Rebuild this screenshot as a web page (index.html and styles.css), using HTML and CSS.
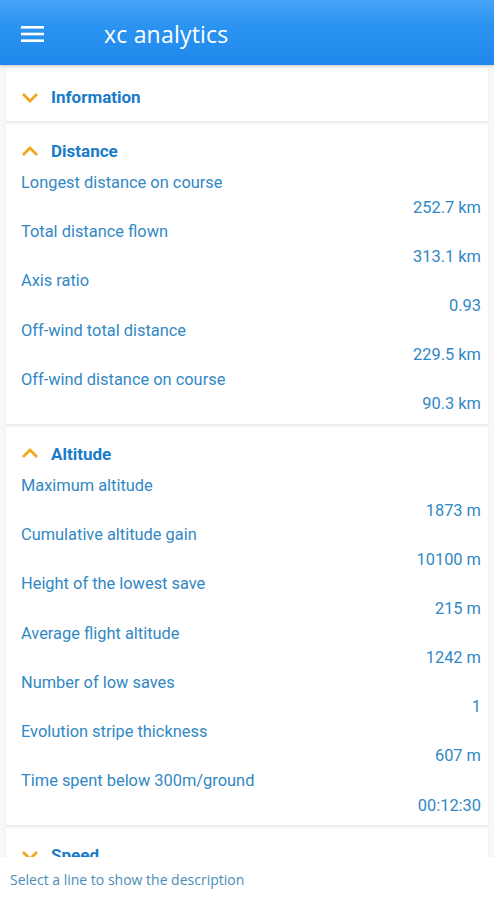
FILE: index.html
```html
<!DOCTYPE html>
<html>
<head>
    <meta charset="utf-8" />
    <title>xc analytics</title>
    <link rel="stylesheet" href="styles.css">
</head>
<body>
    <div class="app-bar">
        <svg class="menu-icon" width="24" height="16" viewBox="0 0 24 16">
            <rect x="0" y="0" width="23" height="2.6" fill="#fff" />
            <rect x="0" y="6.7" width="23" height="2.6" fill="#fff" />
            <rect x="0" y="13.4" width="23" height="2.6" fill="#fff" />
        </svg>
        <span class="app-title">xc analytics</span>
    </div>

    <div class="content">
        <div class="card collapsed">
            <div class="card-header">
                <svg class="chevron" width="18" height="11" viewBox="0 0 18 11"><path d="M2 2 L9 9 L16 2" /></svg>
                Information
            </div>
        </div>

        <div class="card">
            <div class="card-header">
                <svg class="chevron" width="18" height="11" viewBox="0 0 18 11"><path d="M2 9 L9 2 L16 9" /></svg>
                Distance
            </div>
            <div class="row"><div class="label">Longest distance on course</div><div class="value">252.7 km</div></div>
            <div class="row"><div class="label">Total distance flown</div><div class="value">313.1 km</div></div>
            <div class="row"><div class="label">Axis ratio</div><div class="value">0.93</div></div>
            <div class="row"><div class="label">Off-wind total distance</div><div class="value">229.5 km</div></div>
            <div class="row"><div class="label">Off-wind distance on course</div><div class="value">90.3 km</div></div>
        </div>

        <div class="card">
            <div class="card-header">
                <svg class="chevron" width="18" height="11" viewBox="0 0 18 11"><path d="M2 9 L9 2 L16 9" /></svg>
                Altitude
            </div>
            <div class="row"><div class="label">Maximum altitude</div><div class="value">1873 m</div></div>
            <div class="row"><div class="label">Cumulative altitude gain</div><div class="value">10100 m</div></div>
            <div class="row"><div class="label">Height of the lowest save</div><div class="value">215 m</div></div>
            <div class="row"><div class="label">Average flight altitude</div><div class="value">1242 m</div></div>
            <div class="row"><div class="label">Number of low saves</div><div class="value">1</div></div>
            <div class="row"><div class="label">Evolution stripe thickness</div><div class="value">607 m</div></div>
            <div class="row"><div class="label">Time spent below 300m/ground</div><div class="value">00:12:30</div></div>
        </div>

        <div class="card">
            <div class="card-header">
                <svg class="chevron" width="18" height="11" viewBox="0 0 18 11"><path d="M2 2 L9 9 L16 2" /></svg>
                Speed
            </div>
        </div>
    </div>

    <div class="footer">Select a line to show the description</div>
</body>
</html>
```

FILE: styles.css
```css
html, body {
    margin: 0;
    padding: 0;
    height: 100%;
    background-color: #f7f7f7;
    font-family: Roboto, "Liberation Sans", sans-serif;
}

body {
    display: flex;
    flex-direction: column;
    overflow: hidden;
}

.app-bar {
    flex: 0 0 65px;
    display: flex;
    align-items: center;
    background: linear-gradient(to bottom, #46a3f8, #2b93f0 40%, #1f88eb);
    box-shadow: 0 1px 3px rgba(0,0,0,0.2);
    position: relative;
    z-index: 1;
}

.menu-icon {
    margin-left: 21px;
    margin-top: 2px;
}

.app-title {
    margin-left: 59px;
    color: #fff;
    font-family: "Open Sans", sans-serif;
    font-size: 23px;
    letter-spacing: 0.2px;
    margin-top: 2px;
}

.content {
    flex: 1;
    overflow: hidden;
    padding-top: 3px;
}

.card {
    background-color: #fff;
    margin: 0 6px 3px 6px;
    padding: 14px 7px 7px 15px;
    box-shadow: 0 1px 2px rgba(0,0,0,0.08);
}

.card.collapsed {
    padding-top: 16px;
    padding-bottom: 11px;
}

.card-header {
    display: flex;
    align-items: center;
    height: 26px;
    margin-bottom: 7px;
    color: #1a7bc9;
    font-weight: bold;
    font-size: 17px;
}

.collapsed .card-header {
    margin-bottom: 0;
}

.chevron {
    margin-right: 12px;
    margin-left: 0;
}

.chevron path {
    fill: none;
    stroke: #f2a71b;
    stroke-width: 2.8;
}

.row {
    font-size: 16.4px;
    color: #3288c4;
}

.label {
    line-height: 24.6px;
}

.value {
    line-height: 24.6px;
    text-align: right;
}

.footer {
    flex: 0 0 42px;
    background-color: #fff;
    color: #4a8db8;
    font-family: "Open Sans", sans-serif;
    font-size: 14px;
    display: flex;
    align-items: center;
    padding-left: 10px;
    padding-top: 1px;
}
```
